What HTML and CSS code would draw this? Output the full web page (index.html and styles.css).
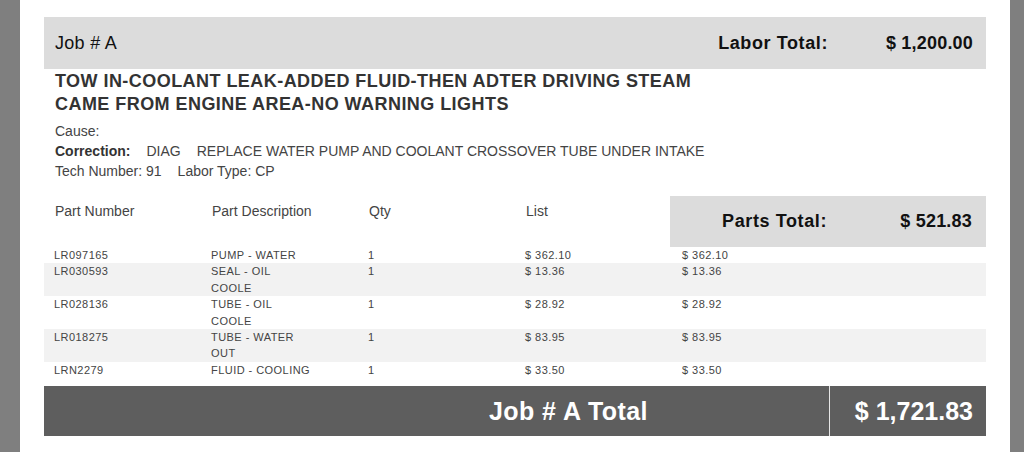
FILE: index.html
```html
<!DOCTYPE html>
<html lang="en">
<head>
<meta charset="utf-8">
<title>Job # A</title>
<link rel="stylesheet" href="styles.css">
</head>
<body>
<div class="page">
  <div class="job-bar">
    <div class="job-name">Job # A</div>
    <div class="bar-label">Labor Total:</div>
    <div class="bar-amount">$ 1,200.00</div>
  </div>

  <div class="details">
    <h1 class="complaint">TOW IN-COOLANT LEAK-ADDED FLUID-THEN ADTER DRIVING STEAM<br>CAME FROM ENGINE AREA-NO WARNING LIGHTS</h1>
    <p class="line">Cause:</p>
    <p class="line"><b>Correction:</b><span class="gap">DIAG</span><span class="gap">REPLACE WATER PUMP AND COOLANT CROSSOVER TUBE UNDER INTAKE</span></p>
    <p class="line">Tech Number: 91<span class="gap">Labor Type: CP</span></p>
  </div>

  <div class="parts">
    <div class="parts-head">
      <div class="th">Part Number</div>
      <div class="th">Part Description</div>
      <div class="th">Qty</div>
      <div class="th">List</div>
      <div class="parts-total">
        <div class="bar-label">Parts Total:</div>
        <div class="bar-amount parts-amount">$ 521.83</div>
      </div>
    </div>
    <div class="row">
      <div class="td">LR097165</div>
      <div class="td">PUMP - WATER</div>
      <div class="td">1</div>
      <div class="td">$ 362.10</div>
      <div class="td">$ 362.10</div>
      <div class="td"></div>
    </div>
    <div class="row">
      <div class="td">LR030593</div>
      <div class="td">SEAL - OIL<br>COOLE</div>
      <div class="td">1</div>
      <div class="td">$ 13.36</div>
      <div class="td">$ 13.36</div>
      <div class="td"></div>
    </div>
    <div class="row">
      <div class="td">LR028136</div>
      <div class="td">TUBE - OIL<br>COOLE</div>
      <div class="td">1</div>
      <div class="td">$ 28.92</div>
      <div class="td">$ 28.92</div>
      <div class="td"></div>
    </div>
    <div class="row">
      <div class="td">LR018275</div>
      <div class="td">TUBE - WATER<br>OUT</div>
      <div class="td">1</div>
      <div class="td">$ 83.95</div>
      <div class="td">$ 83.95</div>
      <div class="td"></div>
    </div>
    <div class="row">
      <div class="td">LRN2279</div>
      <div class="td">FLUID - COOLING</div>
      <div class="td">1</div>
      <div class="td">$ 33.50</div>
      <div class="td">$ 33.50</div>
      <div class="td"></div>
    </div>
  </div>

  <div class="grand">
    <div class="grand-label">Job # A Total</div>
    <div class="grand-amount">$ 1,721.83</div>
  </div>
</div>
</body>
</html>
```
FILE: styles.css
```css
html, body {
  margin: 0;
  padding: 0;
}

body {
  background: #7f7f7f;
  font-family: "Liberation Sans", Arial, Helvetica, sans-serif;
  color: #333;
}

.page {
  margin: 0 14px 0 20px;
  background: #ffffff;
  padding: 17px 24px 16px;
  min-height: 419px;
}

.job-bar {
  display: grid;
  grid-template-columns: repeat(6, 1fr);
  align-items: center;
  height: 52px;
  background: #dcdcdc;
}

.job-name {
  grid-column: 1 / 5;
  padding-left: 11px;
  font-size: 18px;
  letter-spacing: 0.3px;
  color: #111;
}

.bar-label {
  text-align: right;
  padding-right: 1px;
  font-size: 18px;
  letter-spacing: 0.6px;
  font-weight: bold;
  color: #111;
}

.bar-amount {
  text-align: right;
  padding-right: 13px;
  font-size: 18px;
  letter-spacing: 0.2px;
  font-weight: bold;
  color: #111;
}

.parts-amount {
  padding-right: 14px;
}

.details {
  padding: 1px 11px 0;
}

.complaint {
  margin: 0 0 5px;
  font-size: 18px;
  line-height: 23px;
  letter-spacing: 0.45px;
  font-weight: bold;
  color: #333;
}

.line {
  margin: 0;
  font-size: 14px;
  line-height: 20px;
  color: #444;
}

.line b {
  color: #333;
}

.gap {
  margin-left: 16px;
}

.parts {
  margin-top: 15px;
}

.parts-head {
  display: grid;
  grid-template-columns: repeat(6, 1fr);
  height: 51px;
}

.th {
  padding: 7px 11px 0;
  font-size: 14px;
  line-height: 16px;
  color: #444;
}

.parts-total {
  grid-column: 5 / 7;
  display: grid;
  grid-template-columns: 1fr 1fr;
  align-items: center;
  margin-left: -2px;
  background: #dcdcdc;
}

.row {
  display: grid;
  grid-template-columns: repeat(6, 1fr);
  font-size: 11px;
  line-height: 16.4px;
  letter-spacing: 0.45px;
  color: #444;
}

.row:nth-child(odd) {
  background: #f2f2f2;
}

.td {
  padding-left: 10px;
}

.grand {
  display: grid;
  grid-template-columns: 5fr 1fr;
  margin-top: 8px;
  height: 50px;
  background: #5e5e5e;
  color: #ffffff;
  font-size: 25px;
  font-weight: bold;
}

.grand-label {
  display: flex;
  align-items: center;
  justify-content: flex-end;
  padding-right: 181px;
  letter-spacing: 0.45px;
}

.grand-amount {
  display: flex;
  align-items: center;
  justify-content: flex-end;
  padding-right: 13px;
  border-left: 1px solid #e6e6e6;
}
```
